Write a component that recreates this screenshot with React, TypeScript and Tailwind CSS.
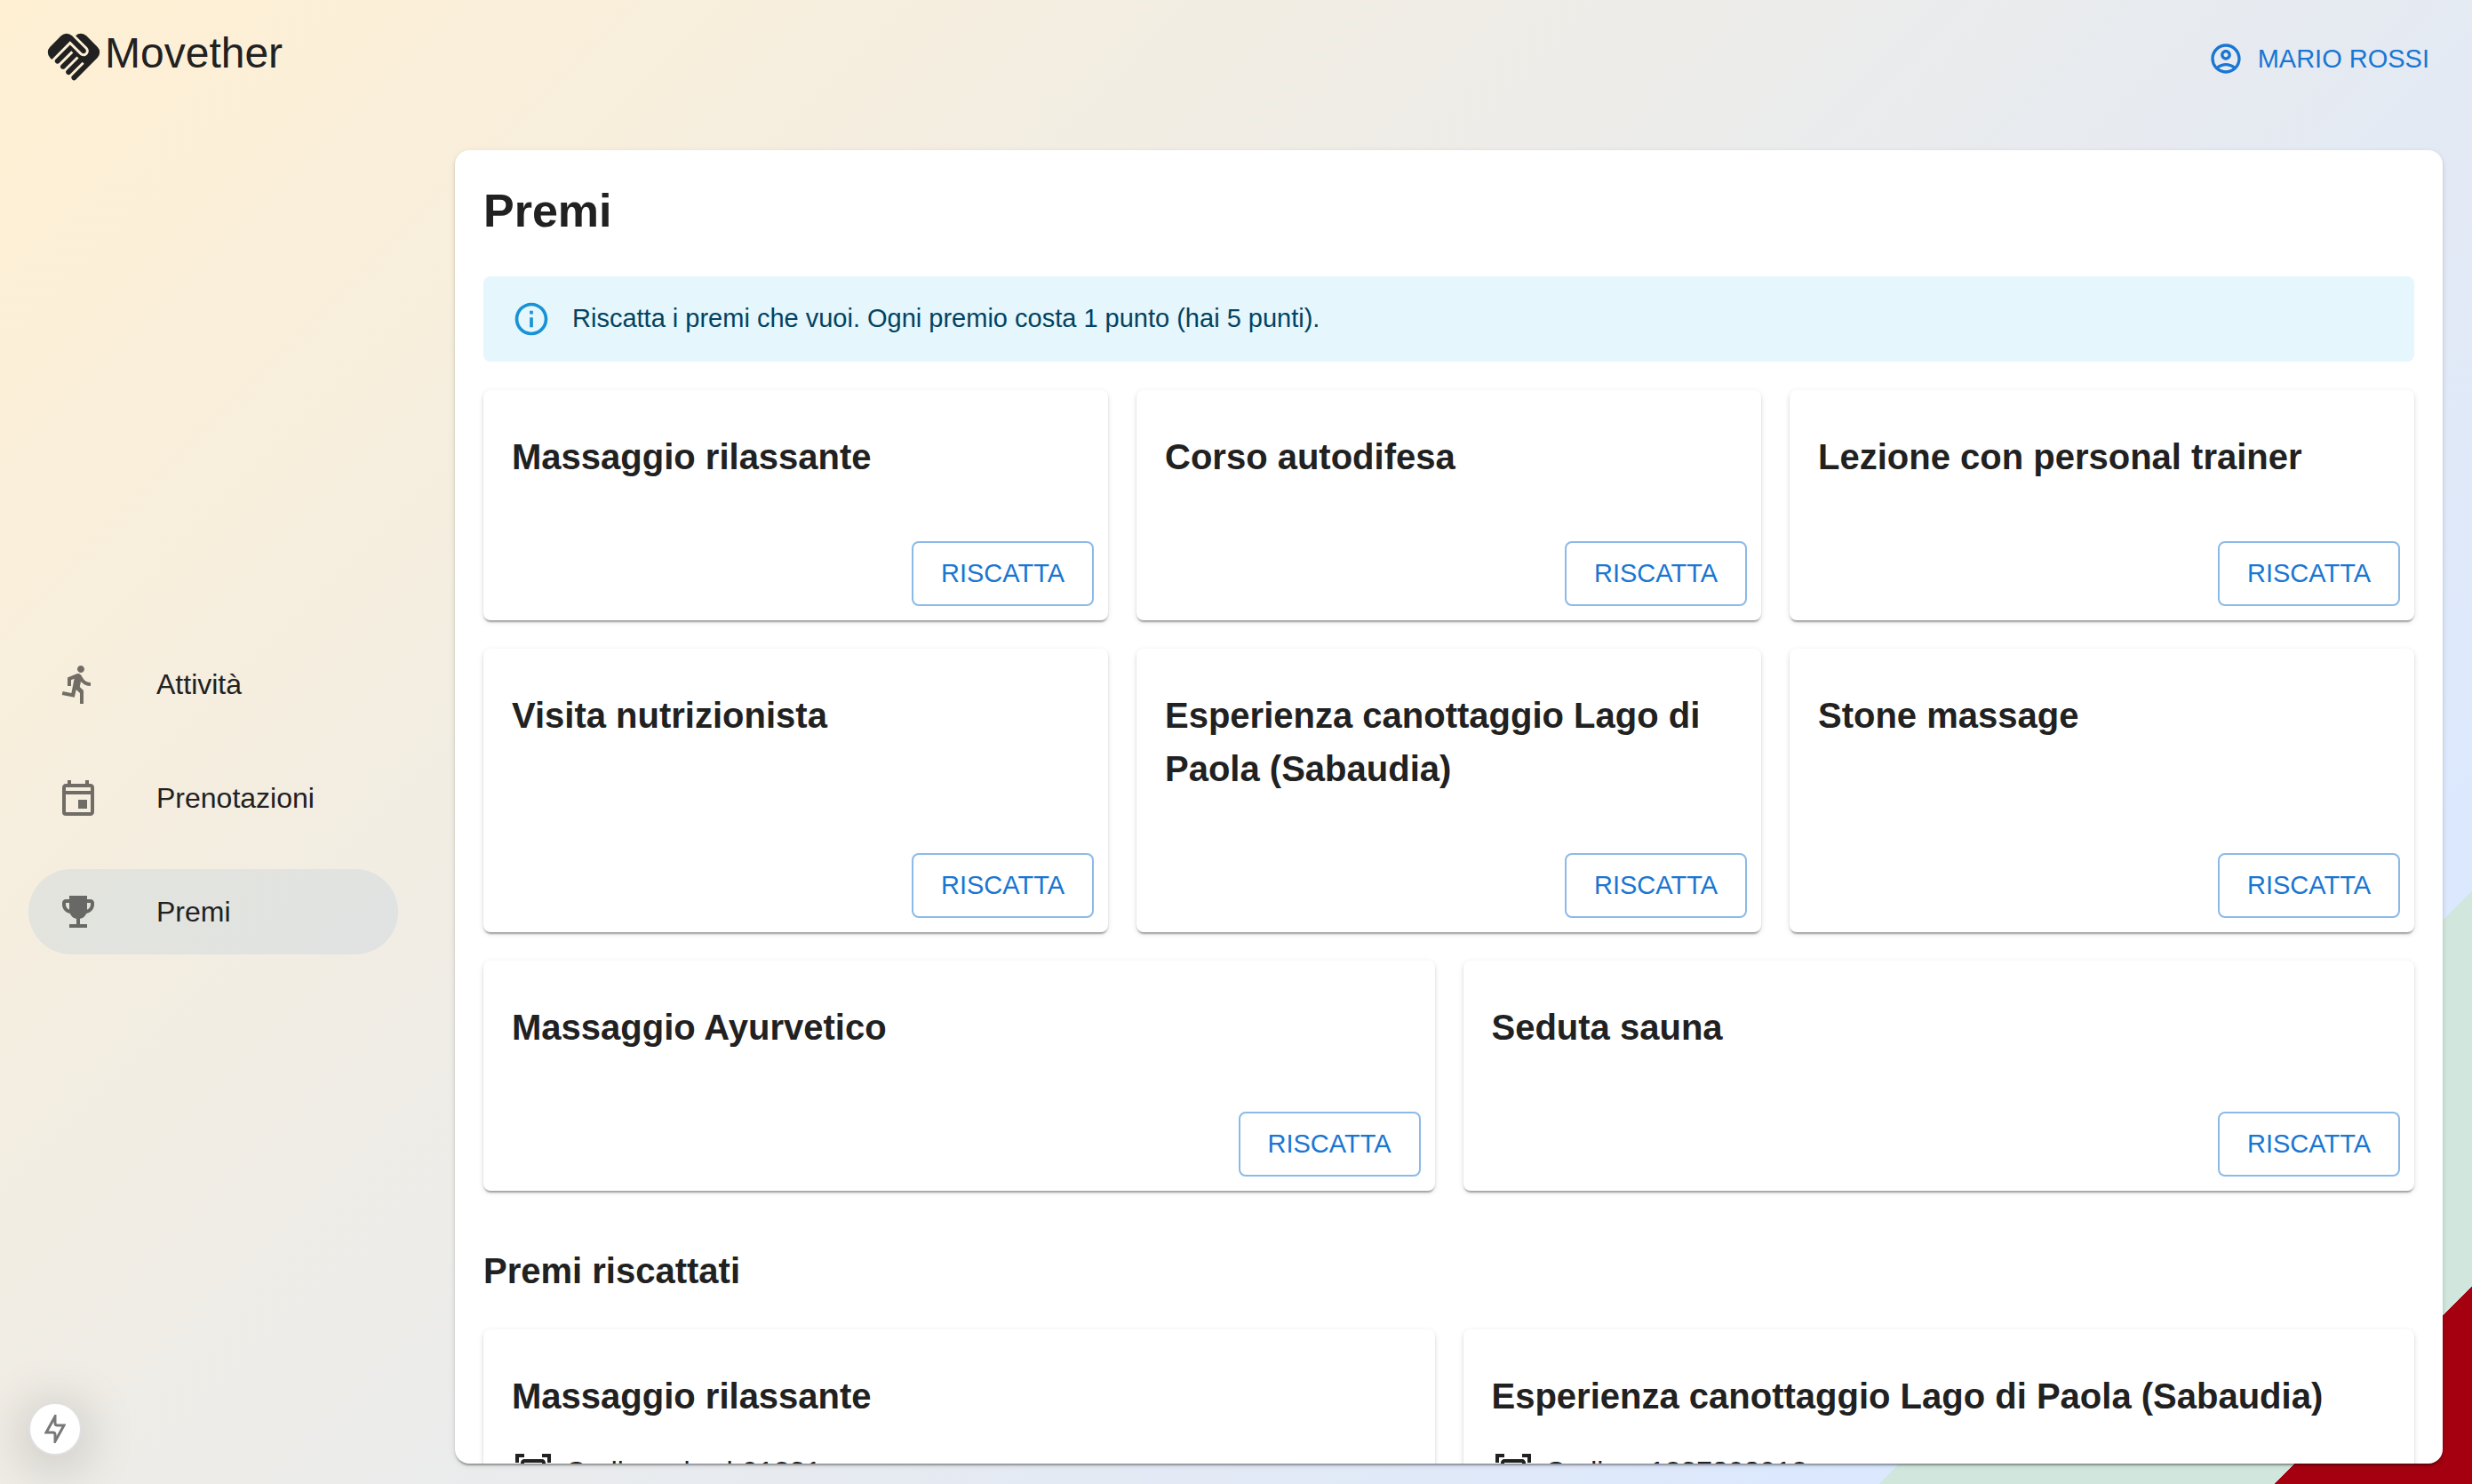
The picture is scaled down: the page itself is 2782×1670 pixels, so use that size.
import {
  MdDirectionsRun,
  MdEmojiEvents,
  MdHandshake,
  MdInfoOutline,
  MdOutlineAccountCircle,
  MdOutlineDocumentScanner,
  MdOutlineEvent,
} from "react-icons/md";

const elevation =
  "shadow-[0_4px_2px_-2px_rgba(0,0,0,0.2),0_2px_2px_0_rgba(0,0,0,0.14),0_2px_6px_0_rgba(0,0,0,0.12)]";

const navItems = [
  { label: "Attività", icon: MdDirectionsRun, active: false },
  { label: "Prenotazioni", icon: MdOutlineEvent, active: false },
  { label: "Premi", icon: MdEmojiEvents, active: true },
];

const rewards = [
  { title: "Massaggio rilassante", span: "col-span-2" },
  { title: "Corso autodifesa", span: "col-span-2" },
  { title: "Lezione con personal trainer", span: "col-span-2" },
  { title: "Visita nutrizionista", span: "col-span-2" },
  { title: "Esperienza canottaggio Lago di Paola (Sabaudia)", span: "col-span-2" },
  { title: "Stone massage", span: "col-span-2" },
  { title: "Massaggio Ayurvetico", span: "col-span-3" },
  { title: "Seduta sauna", span: "col-span-3" },
];

const redeemed = [
  { title: "Massaggio rilassante", code: "Codice: ckcsh91231" },
  { title: "Esperienza canottaggio Lago di Paola (Sabaudia)", code: "Codice: 1237898912" },
];

function Header() {
  return (
    <header className="flex items-start justify-between px-12">
      <a href="#" className="flex h-32 items-center">
        <MdHandshake className="size-[70px]" aria-hidden="true" />
        <span className="pb-2 text-[48px] leading-[64px]">Movether</span>
      </a>
      <button type="button" className="mt-10 flex items-center gap-4 text-[29px] leading-[52px] text-[#1976d2]">
        <MdOutlineAccountCircle className="size-10" aria-hidden="true" />
        MARIO ROSSI
      </button>
    </header>
  );
}

function Sidebar() {
  return (
    <nav className="mb-5 flex w-[512px] shrink-0 flex-col gap-8 self-center px-8">
      {navItems.map(({ label, icon: Icon, active }) => (
        <a
          key={label}
          href="#"
          aria-current={active ? "page" : undefined}
          className={`mr-8 flex h-24 items-center gap-16 rounded-full px-8 text-[32px] leading-[48px] ${
            active ? "bg-[#1976d2]/[0.08]" : ""
          }`}
        >
          <Icon className="size-12 text-black/54" aria-hidden="true" />
          {label}
        </a>
      ))}
    </nav>
  );
}

function RewardCard({ title, span }: { title: string; span: string }) {
  return (
    <article className={`flex flex-col justify-between rounded-lg bg-white ${elevation} ${span}`}>
      <h2 className="px-8 pt-[45px] pb-[49px] text-[40px] leading-[60px] font-bold">{title}</h2>
      <div className="flex justify-end p-4">
        <button
          type="button"
          className="h-[73px] min-w-[205px] rounded-lg border-2 border-[#1976d2]/50 px-7 text-[29px] text-[#1976d2]"
        >
          RISCATTA
        </button>
      </div>
    </article>
  );
}

function RedeemedCard({ title, code }: { title: string; code: string }) {
  return (
    <article className={`rounded-lg bg-white p-8 pt-[45px] ${elevation}`}>
      <h3 className="text-[40px] leading-[60px] font-bold">{title}</h3>
      <p className="mt-[33px] flex items-start gap-3 text-[32px] leading-[44px]">
        <MdOutlineDocumentScanner className="size-12" aria-hidden="true" />
        {code}
      </p>
    </article>
  );
}

export default function App() {
  return (
    <div className="relative flex h-screen flex-col overflow-hidden bg-[linear-gradient(135deg,#fff0d3_0%,#dbe8fe_85%,#d1e7dd_85%,#d1e7dd_95%,#a50010_95%)] font-['Liberation_Sans',Arial,sans-serif] text-[#212121]">
      <Header />
      <div className="mt-[41px] flex min-h-0 flex-1 pr-[33px] pb-[23px]">
        <Sidebar />
        <main className={`min-w-0 flex-1 overflow-hidden rounded-2xl bg-white p-8 ${elevation}`}>
          <h1 className="text-[52px] leading-[72px] font-bold">Premi</h1>
          <div role="status" className="mt-[38px] flex h-24 items-center gap-6 rounded-lg bg-[#e5f6fd] px-8 text-[29px] text-[#014361]">
            <MdInfoOutline className="size-11 text-[#0288d1] opacity-90" aria-hidden="true" />
            Riscatta i premi che vuoi. Ogni premio costa 1 punto (hai 5 punti).
          </div>
          <section aria-label="Premi disponibili" className="mt-8 grid grid-cols-6 gap-8">
            {rewards.map((reward) => (
              <RewardCard key={reward.title} {...reward} />
            ))}
          </section>
          <h2 className="mt-[60px] text-[40px] leading-[60px] font-bold">Premi riscattati</h2>
          <section aria-label="Premi riscattati" className="mt-9 grid grid-cols-2 gap-8">
            {redeemed.map((reward) => (
              <RedeemedCard key={reward.title} {...reward} />
            ))}
          </section>
        </main>
      </div>
      <button
        type="button"
        aria-label="Indicatore di sviluppo"
        className="absolute bottom-8 left-8 flex size-[60px] items-center justify-center rounded-full border-2 border-[#dfdfe2] bg-white text-[#787878] shadow-[0_8px_60px_rgba(0,0,0,0.25)]"
      >
        <svg viewBox="0 0 24 32" className="h-8 w-6" fill="none" stroke="currentColor" strokeWidth="3" aria-hidden="true">
          <path d="M12 2 2 20h7.500q2.500 0 2.500 2.500V30l10-18h-7.500q-2.500 0-2.500-2.500Z" />
        </svg>
      </button>
    </div>
  );
}
